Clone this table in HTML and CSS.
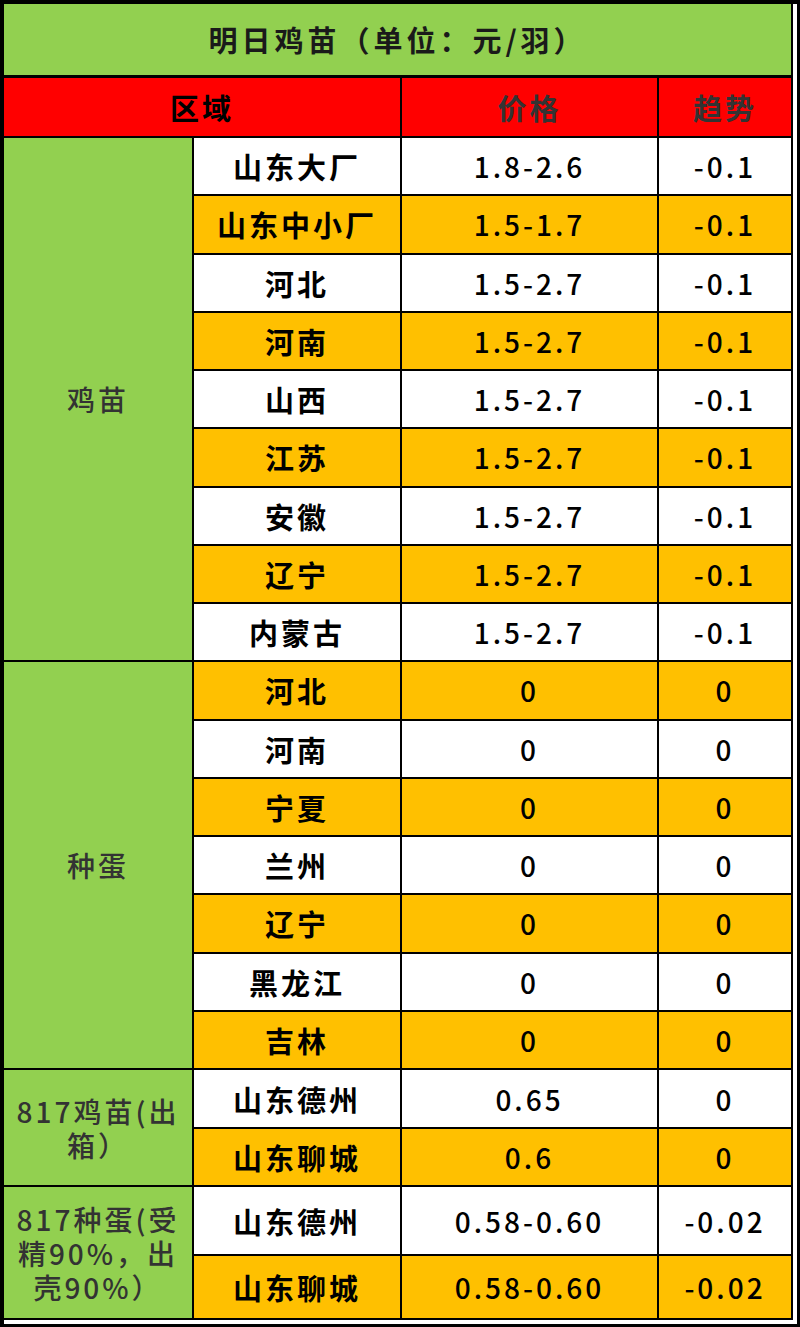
FILE: index.html
```html
<!DOCTYPE html>
<html lang="zh-CN">
<head>
<meta charset="utf-8">
<title>明日鸡苗</title>
<link rel="stylesheet" href="styles.css">
</head>
<body>
<div class="sheet">
  <div class="title">明日鸡苗（单位：元/羽）</div>
  <div class="grid">
    <div class="hd hd-area">区域</div>
    <div class="hd hd-grey">价格</div>
    <div class="hd hd-grey">趋势</div>

    <div class="cat span9">鸡苗</div>
    <div class="c w">山东大厂</div><div class="c w num">1.8-2.6</div><div class="c w num">-0.1</div>
    <div class="c y">山东中小厂</div><div class="c y num">1.5-1.7</div><div class="c y num">-0.1</div>
    <div class="c w">河北</div><div class="c w num">1.5-2.7</div><div class="c w num">-0.1</div>
    <div class="c y">河南</div><div class="c y num">1.5-2.7</div><div class="c y num">-0.1</div>
    <div class="c w">山西</div><div class="c w num">1.5-2.7</div><div class="c w num">-0.1</div>
    <div class="c y">江苏</div><div class="c y num">1.5-2.7</div><div class="c y num">-0.1</div>
    <div class="c w">安徽</div><div class="c w num">1.5-2.7</div><div class="c w num">-0.1</div>
    <div class="c y">辽宁</div><div class="c y num">1.5-2.7</div><div class="c y num">-0.1</div>
    <div class="c w">内蒙古</div><div class="c w num">1.5-2.7</div><div class="c w num">-0.1</div>

    <div class="cat span7">种蛋</div>
    <div class="c y">河北</div><div class="c y num">0</div><div class="c y num">0</div>
    <div class="c w">河南</div><div class="c w num">0</div><div class="c w num">0</div>
    <div class="c y">宁夏</div><div class="c y num">0</div><div class="c y num">0</div>
    <div class="c w">兰州</div><div class="c w num">0</div><div class="c w num">0</div>
    <div class="c y">辽宁</div><div class="c y num">0</div><div class="c y num">0</div>
    <div class="c w">黑龙江</div><div class="c w num">0</div><div class="c w num">0</div>
    <div class="c y">吉林</div><div class="c y num">0</div><div class="c y num">0</div>

    <div class="cat span2">817鸡苗(出箱）</div>
    <div class="c w">山东德州</div><div class="c w num">0.65</div><div class="c w num">0</div>
    <div class="c y">山东聊城</div><div class="c y num">0.6</div><div class="c y num">0</div>

    <div class="cat span2">817种蛋(受精90%，出壳90%）</div>
    <div class="c w">山东德州</div><div class="c w num">0.58-0.60</div><div class="c w num">-0.02</div>
    <div class="c y">山东聊城</div><div class="c y num">0.58-0.60</div><div class="c y num">-0.02</div>
  </div>
</div>
</body>
</html>
```

FILE: styles.css
```css
html, body {
  margin: 0;
  padding: 0;
  background: #ffffff;
}

.sheet {
  box-sizing: border-box;
  width: 800px;
  height: 1327px;
  background: #ffffff;
  border-top: 4px solid #000;
  border-left: 4px solid #000;
  border-right: 3px solid #000;
  border-bottom: 3px solid #000;
  padding-right: 4px;
  padding-bottom: 4px;
  font-family: "Noto Sans CJK SC", "Noto Sans", sans-serif;
}

.title {
  box-sizing: border-box;
  height: 74px;
  width: 789px;
  background: #92d050;
  border-bottom: 3px solid #000;
  border-right: 2px solid #000;
  display: flex;
  align-items: center;
  justify-content: center;
  font-size: 29px;
  font-weight: 700;
  color: #1a1a1a;
  letter-spacing: 4px;
  padding-bottom: 2px;
}

.grid {
  display: grid;
  width: 789px;
  box-sizing: border-box;
  background: #000;
  grid-template-columns: 188px 206px 255px 132px;
  grid-template-rows: 58px repeat(16, 56.25px) 57px 56px 67px 62px;
  column-gap: 2px;
  row-gap: 2px;
  padding-right: 2px;
  padding-bottom: 2px;
}

.hd {
  background: #ff0000;
  display: flex;
  align-items: center;
  justify-content: center;
  font-size: 29px;
  font-weight: 700;
  letter-spacing: 3px;
  color: #000;
}

.hd-area {
  grid-column: span 2;
}

.hd-grey {
  color: #333;
}

.cat {
  background: #92d050;
  display: flex;
  align-items: center;
  justify-content: center;
  text-align: center;
  font-size: 28px;
  font-weight: 500;
  line-height: 34px;
  color: #333;
  letter-spacing: 3px;
  padding: 0 4px;
}

.span9 { grid-row: span 9; }
.span7 { grid-row: span 7; }
.span2 { grid-row: span 2; }

.c {
  display: flex;
  align-items: center;
  justify-content: center;
  font-size: 29px;
  font-weight: 700;
  letter-spacing: 3px;
  color: #000;
}

.num {
  font-size: 28px;
  font-weight: 500;
  letter-spacing: 3px;
}

.w { background: #ffffff; }
.y { background: #ffc000; }
```
